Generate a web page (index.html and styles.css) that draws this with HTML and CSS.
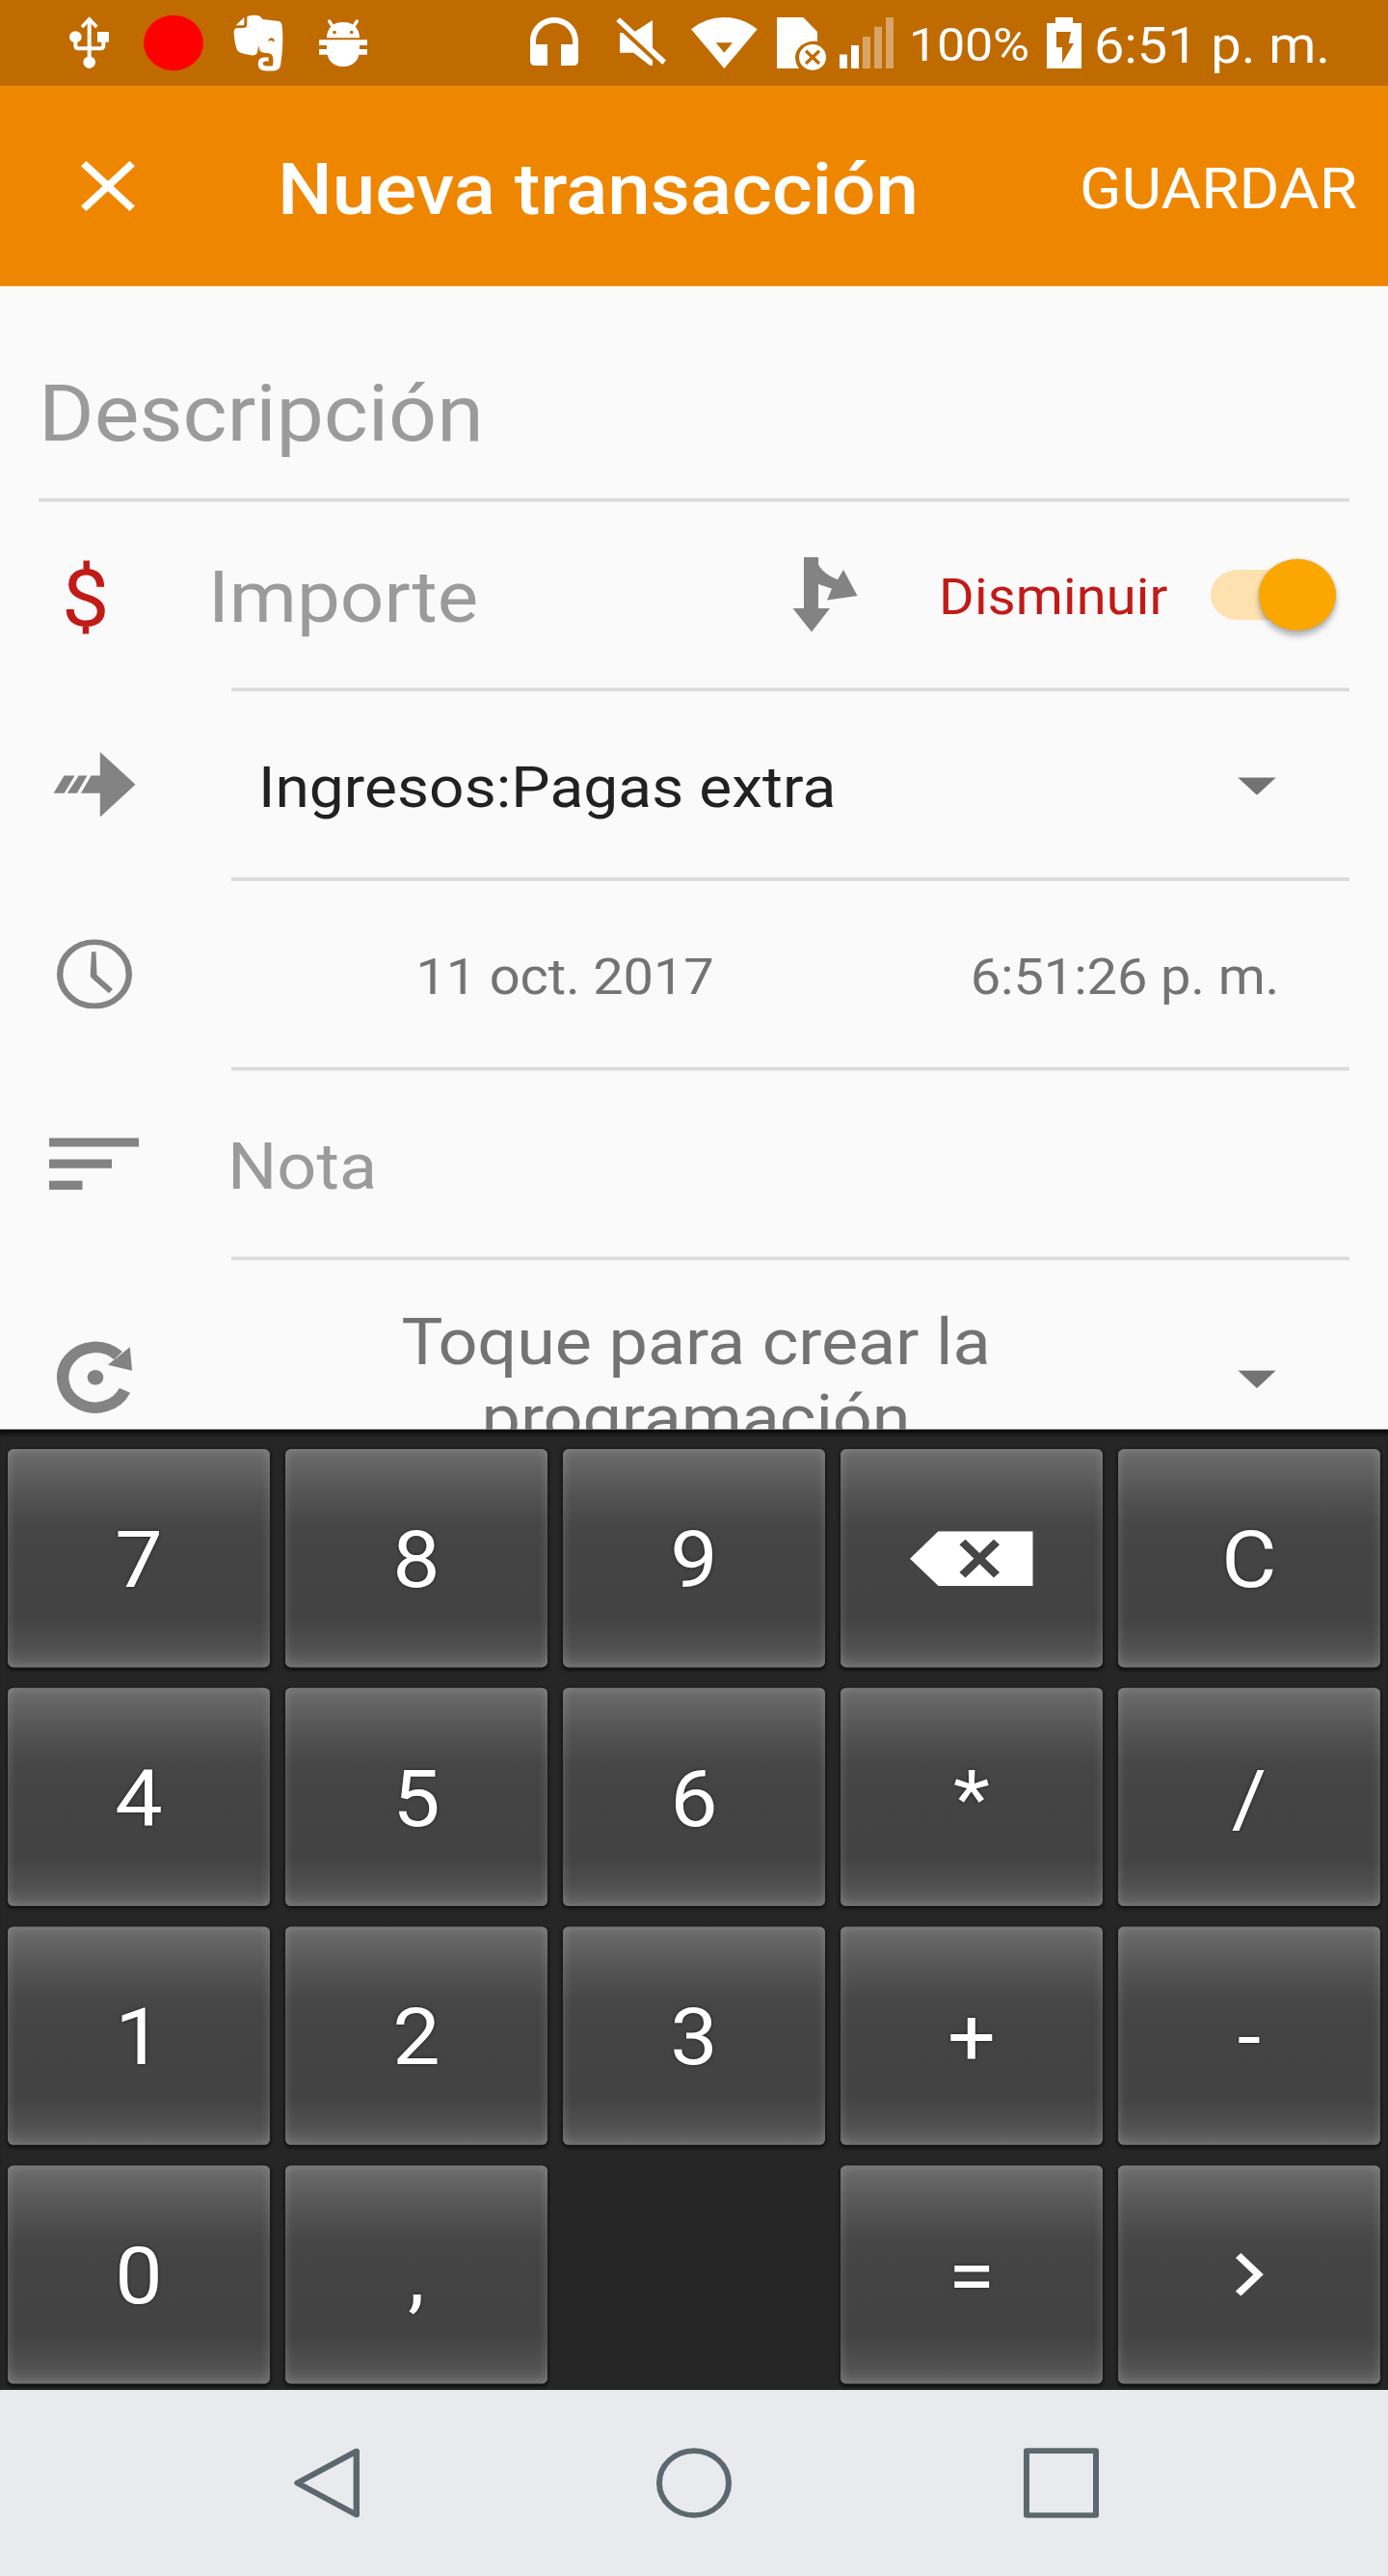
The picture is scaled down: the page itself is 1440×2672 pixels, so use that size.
FILE: index.html
```html
<!DOCTYPE html>
<html lang="es">
<head>
<meta charset="utf-8">
<title>Nueva transacción</title>
<link rel="stylesheet" href="styles.css">
</head>
<body>
<div class="screen">
  <header class="status">
    <div class="status-left">
      <svg class="usb" viewBox="36 0 123 267" preserveAspectRatio="none"><path d="M98 60V180M55 118V142Q55 151 64 151H133Q142 151 142 142V120" fill="none" stroke="#fff" stroke-width="12"/><path d="M75 84L98 60L121 84" fill="none" stroke="#fff" stroke-width="11"/><ellipse cx="98" cy="194" rx="19" ry="18.500"/><ellipse cx="55" cy="115" rx="19" ry="18"/><path d="M123 99h36v32h-36z"/></svg>
      <span class="rec"></span>
      <svg class="ever" viewBox="546 0 156 267" preserveAspectRatio="none"><path d="M554 79L580 54V75Q580 79 576 79Z"/><path d="M548 98Q549 87 560 87H578Q589 87 589 76V52Q600 46 612 47Q632 47 637 60L688 66Q696 68 698 80Q704 140 693 204Q690 219 672 220H648Q624 220 623 199Q623 178 643 178H656V190H646Q638 191 638 198Q639 205 650 205H668Q673 190 668 174Q664 165 650 165Q634 165 628 157L626 142Q623 152 621 163Q619 173 605 172Q582 170 564 162Q557 158 555 148Q548 118 548 98ZM655 129Q663 122 674 131Q675 118 664 118Q655 120 655 129Z" fill-rule="evenodd"/></svg>
      <svg class="bug" viewBox="810 0 156 267" preserveAspectRatio="none"><path d="M845 66L856 83M931 66L920 83" stroke="#fff" stroke-width="10" stroke-linecap="round"/><path d="M837 118C837 87 857 69 888 69S939 87 939 118ZM861 95a5.500 5.500 0 1 0 .1 11a5.500 5.500 0 1 0 -.1-11ZM914 95a5.500 5.500 0 1 0 .1 11a5.500 5.500 0 1 0 -.1-11Z" fill-rule="evenodd"/><path d="M813 124H963V141H939V153H963V170H937C933 193 912 207 888 207S843 193 839 170H813V153H837V141H813Z"/></svg>
    </div>
    <div class="status-right">
      <svg class="head" viewBox="90 0 150 267" preserveAspectRatio="none"><path d="M90 129C90 86 123 54 165 54S240 86 240 129V188Q240 204 224 204H186V138H222V129C222 96 197 72 165 72S108 96 108 129V138H144V204H106Q90 204 90 188Z"/></svg>
      <svg class="mute" viewBox="357 0 156 267" preserveAspectRatio="none"><path d="M358 66L369 55L513 187L502 201ZM471 63V150L415 99ZM369 102H378L471 187V204H463L412 164H369Z"/></svg>
      <svg class="wifi" viewBox="590 0 207 267" preserveAspectRatio="none"><path d="M590 91Q635 54 693 54T796 91L693 213ZM667 133L693 164L719 133Z" fill-rule="evenodd"/></svg>
      <svg class="sim" viewBox="858 0 153 267" preserveAspectRatio="none"><path d="M858 54H940L984 99V129C950 123 917 145 915 176Q915 197 927 213H858Z"/><ellipse cx="969" cy="178" rx="42" ry="40"/><path d="M948 158L990 198M990 158L948 198" stroke="#bf6b00" stroke-width="10"/></svg>
      <svg class="signal" viewBox="1053 0 168 267" preserveAspectRatio="none"><path d="M1053 169h24v44h-24zM1089 141h24v72h-24z"/><path d="M1125 114h24v99h-24zM1161 83h24v130h-24zM1197 54h24v159h-24z" fill="#d9a566"/></svg>
      <span class="pct">100%</span>
      <svg class="batt" viewBox="438 0 108 267" preserveAspectRatio="none"><path d="M438 72H465V54H519V72H546V213H438ZM468 99V147H486V196L522 135H506L513 99Z" fill-rule="evenodd"/></svg>
      <span class="time">6:51 p. m.</span>
    </div>
  </header>

  <div class="appbar">
    <svg class="close" viewBox="0 0 56 56"><path d="M2.800 2.800L53.200 53.200M53.200 2.800L2.800 53.200" stroke="#fff" stroke-width="7.800"/></svg>
    <h1 class="title">Nueva transacción</h1>
    <span class="save">GUARDAR</span>
  </div>

  <main class="form">
    <div class="desc hint"><span>Descripción</span></div>

    <div class="row">
      <div class="lead"><span class="dollar">$</span></div>
      <div class="cell">
        <span class="amount hint">Importe</span>
        <svg class="split" viewBox="0 0 68 84"><path d="M12 0H27V8C31 16 38 21 47 25L53 14L67.500 43L36 48L41 35C35 33 31 32 27 30V57H39L20 83.500L.5 57H12Z"/></svg>
        <span class="kind">Disminuir</span>
        <span class="switch"><span class="thumb"></span></span>
      </div>
    </div>

    <div class="row">
      <div class="lead"><svg class="transfer" viewBox="0 0 86 74"><path d="M48.800 .7L85.500 37L48.800 73.600V46.700H29L39.600 27H48.800ZM11.600 27H22.600L11.600 46.700H.6ZM26.700 27H35.400L24.900 46.700H14.800Z"/></svg></div>
      <div class="cell"><span class="account">Ingresos:Pagas extra</span><span class="caret"></span></div>
    </div>

    <div class="row">
      <div class="lead"><svg class="clock" viewBox="0 0 78 78"><circle cx="39" cy="39" r="35.800" fill="none" stroke="#838383" stroke-width="6.400"/><path d="M36 14H40.500L41.500 40L58 56L54 60.500L35.500 43Q34.700 42 34.700 40Z"/></svg></div>
      <div class="cell"><span class="date">11 oct. 2017</span><span class="hour">6:51:26 p. m.</span></div>
    </div>

    <div class="row">
      <div class="lead"><svg class="lines" viewBox="0 0 93 58"><path d="M0 0h93v10H0zM0 24h65v10H0zM0 48h34.500v10H0z"/></svg></div>
      <div class="cell"><span class="note hint">Nota</span></div>
    </div>

    <div class="row last">
      <div class="lead"><svg class="repeat" viewBox="-40 -41 80 82"><path d="M23.600 -24.300A33.800 33.800 0 1 0 30.500 14.500" fill="none" stroke="#838383" stroke-width="12.400"/><path d="M35.800 -34.100L38.100 -7.700L12.900 -14Z"/><circle r="8.300"/></svg></div>
      <div class="cell"><span class="schedule">Toque para crear la programación</span><span class="caret"></span></div>
    </div>
  </main>

  <div class="keypad">
    <button class="key">7</button><button class="key">8</button><button class="key">9</button>
    <button class="key"><svg class="back" viewBox="0 0 128 61"><path d="M0 30.500L29.500 0H127.500V61H29.500Z"/><path d="M54.500 12L90 49M90 12L54.500 49" stroke="#464646" stroke-width="8.500"/></svg></button>
    <button class="key">C</button>
    <button class="key">4</button><button class="key">5</button><button class="key">6</button><button class="key">*</button><button class="key">/</button>
    <button class="key">1</button><button class="key">2</button><button class="key">3</button><button class="key">+</button><button class="key">-</button>
    <button class="key">0</button><button class="key">,</button><span></span><button class="key">=</button>
    <button class="key"><svg class="next" viewBox="0 0 29 48"><path d="M2.700 2.700L23.500 24L2.700 45.300" fill="none" stroke="#fff" stroke-width="7.600"/></svg></button>
  </div>

  <nav class="navbar">
    <svg class="nav-back" viewBox="0 0 68 78"><path d="M64.800 3.500V74.500L3.500 39Z" fill="none" stroke="#5b6870" stroke-width="6.400" stroke-linejoin="round"/></svg>
    <span class="nav-home"></span>
    <span class="nav-recent"></span>
  </nav>
</div>
</body>
</html>
```

FILE: styles.css
```css
* { box-sizing: border-box; }

html { height: 2672px; overflow: hidden; }

body {
  margin: 0;
  width: 1440px;
  height: 2672px;
  overflow: hidden;
  background: #e9eaee;
  font-family: Roboto, "Liberation Sans", sans-serif;
}

svg { display: block; flex: none; fill: #838383; }
span { flex: none; }

/* 360x720dp device canvas, compressed vertically to the window height */
.screen {
  width: 1440px;
  height: 2880px;
  margin-bottom: -208px;
  display: flex;
  flex-direction: column;
  transform: scaleY(0.927778);
  transform-origin: 0 0;
}

/* Status bar */
.status {
  height: 96px;
  flex: none;
  display: flex;
  background: #bf6b00;
  color: #fff;
}
.status svg { height: 96px; fill: #fff; }
.status-left { display: flex; align-items: center; width: 550px; padding-left: 72px; }
.status-right { display: flex; align-items: center; white-space: nowrap; }
.usb { width: 41px; }
.rec { width: 62px; height: 62px; margin: 0 31px 0 36px; border-radius: 50%; background: #f00; }
.ever { width: 52px; margin-right: 36px; }
.bug { width: 52px; }
.head { width: 50px; }
.mute { width: 52px; margin-left: 39px; }
.wifi { width: 69px; margin-left: 25.700px; }
.sim { width: 51px; margin-left: 20.300px; }
.signal { width: 56px; margin-left: 14px; }
.pct { width: 143px; margin-left: 16px; padding-top: 4px; font-size: 52px; letter-spacing: -.2px; }
.batt { width: 36px; }
.time { margin-left: 13px; padding-top: 6px; font-size: 56px; letter-spacing: -.1px; }

/* App bar */
.appbar {
  height: 224px;
  flex: none;
  display: flex;
  align-items: center;
  padding-left: 84px;
  background: #ef8600;
  color: #fff;
  white-space: nowrap;
}
.close { width: 56px; height: 56px; }
.title { width: 832px; margin: 0 0 0 148px; padding-top: 7px; font-size: 80px; font-weight: 500; }
.save { padding-top: 6px; font-size: 64px; }

/* Form */
.form {
  height: 1278px;
  flex: none;
  overflow: hidden;
  background: #fafafa;
  color: #737373;
}
.hint { color: #9b9b9b; }
.desc {
  height: 241px;
  margin: 0 40px;
  padding-top: 47px;
  display: flex;
  align-items: center;
  border-bottom: 4px solid #dbdbdb;
  font-size: 88px;
  letter-spacing: -.1px;
}
.row { display: flex; height: 212px; }
.lead { width: 240px; height: 208px; flex: none; display: flex; align-items: center; }
.cell {
  width: 1160px;
  display: flex;
  align-items: center;
  border-bottom: 4px solid #dbdbdb;
  white-space: nowrap;
}
.cell > span:not(.switch):not(.caret) { padding-top: 6px; }

.dollar { margin-left: 64px; padding-top: 8px; font-size: 88px; color: #c11a17; }
.cell > .amount { width: 606px; margin-left: -24px; padding-top: 7px; font-size: 80px; }
.split { width: 68px; height: 84px; }
.kind { width: 282px; margin-left: 84px; font-size: 56px; letter-spacing: .15px; color: #c11a17; }
.switch {
  width: 130px;
  height: 56px;
  display: flex;
  align-items: center;
  justify-content: flex-end;
  border-radius: 28px;
  background: #fde2b0;
}
.thumb {
  width: 80px;
  height: 80px;
  border-radius: 50%;
  background: #fba700;
  box-shadow: 0 6px 7px rgba(0, 0, 0, .28), 0 0 4px rgba(0, 0, 0, .14);
}

.transfer { width: 86px; height: 74px; margin-left: 55px; }
.account { width: 1016px; padding-left: 28px; font-size: 64px; letter-spacing: .06px; color: #212121; }
.caret {
  width: 40px;
  height: 20px;
  margin-left: 28px;
  margin-top: 4px;
  background: #737373;
  clip-path: polygon(0 0, 100% 0, 50% 100%);
}

.clock { width: 78px; height: 78px; margin-left: 59px; }
.date { width: 692px; font-size: 56px; letter-spacing: -.15px; text-align: center; }
.hour { width: 470px; font-size: 56px; letter-spacing: -.15px; text-align: center; }

.lines { width: 93px; height: 58px; margin-left: 51px; }
.note { margin-left: -4px; font-size: 72px; }

.last { height: 262px; }
.last .lead { height: 262px; }
.last .cell { border: 0; }
.repeat { width: 80px; height: 82px; margin-left: 59px; }
.cell > .schedule {
  width: 966px;
  padding-left: 138px;
  padding-right: 140px;
  font-size: 72px;
  line-height: 85px;
  letter-spacing: -.1px;
  text-align: center;
  white-space: normal;
}
/* tighter "To" pair */
.schedule::first-letter { letter-spacing: -5px; }
.last .caret { margin-left: 78px; margin-top: 4px; }

/* Calculator keypad */
.keypad {
  height: 1074px;
  flex: none;
  padding-top: 6px;
  display: grid;
  grid-template-columns: repeat(5, 288px);
  grid-template-rows: repeat(4, 267px);
  background: #262626;
  box-shadow: inset 0 8px 5px -3px #0a0a0a;
}
.key {
  display: flex;
  align-items: center;
  justify-content: center;
  margin: 15.500px 8px 7.500px;
  padding: 3px 0 0;
  border: 0;
  border-radius: 6px;
  background: linear-gradient(#6c6c6c 0, #636363 8%, #545454 20%, #474747 34%, #444 45%, #434343 78%, #505050 91%, #646464 100%);
  box-shadow:
    inset 0 0 11px rgba(255, 255, 255, .2),
    0 2px 4px 1px rgba(0, 0, 0, .6);
  font: 400 88px Roboto, "Liberation Sans", sans-serif;
  color: #fff;
  text-shadow: 0 0 4px rgba(0, 0, 0, .6);
}
.back { width: 128px; height: 61px; margin-top: -2px; fill: #fff; }
.next { width: 29px; height: 48px; margin: -3px 0 0 1px; }

/* Navigation bar */
.navbar {
  height: 208px;
  flex: none;
  display: flex;
  align-items: center;
  padding-left: 305px;
  background: #e9eaee;
}
.nav-back { width: 68px; height: 78px; }
.nav-home { width: 78px; height: 78px; margin-left: 308px; border: 6.500px solid #5b6870; border-radius: 50%; }
.nav-recent { width: 78px; height: 78px; margin-left: 303px; border: 6.500px solid #5b6870; border-radius: 3px; }
```
